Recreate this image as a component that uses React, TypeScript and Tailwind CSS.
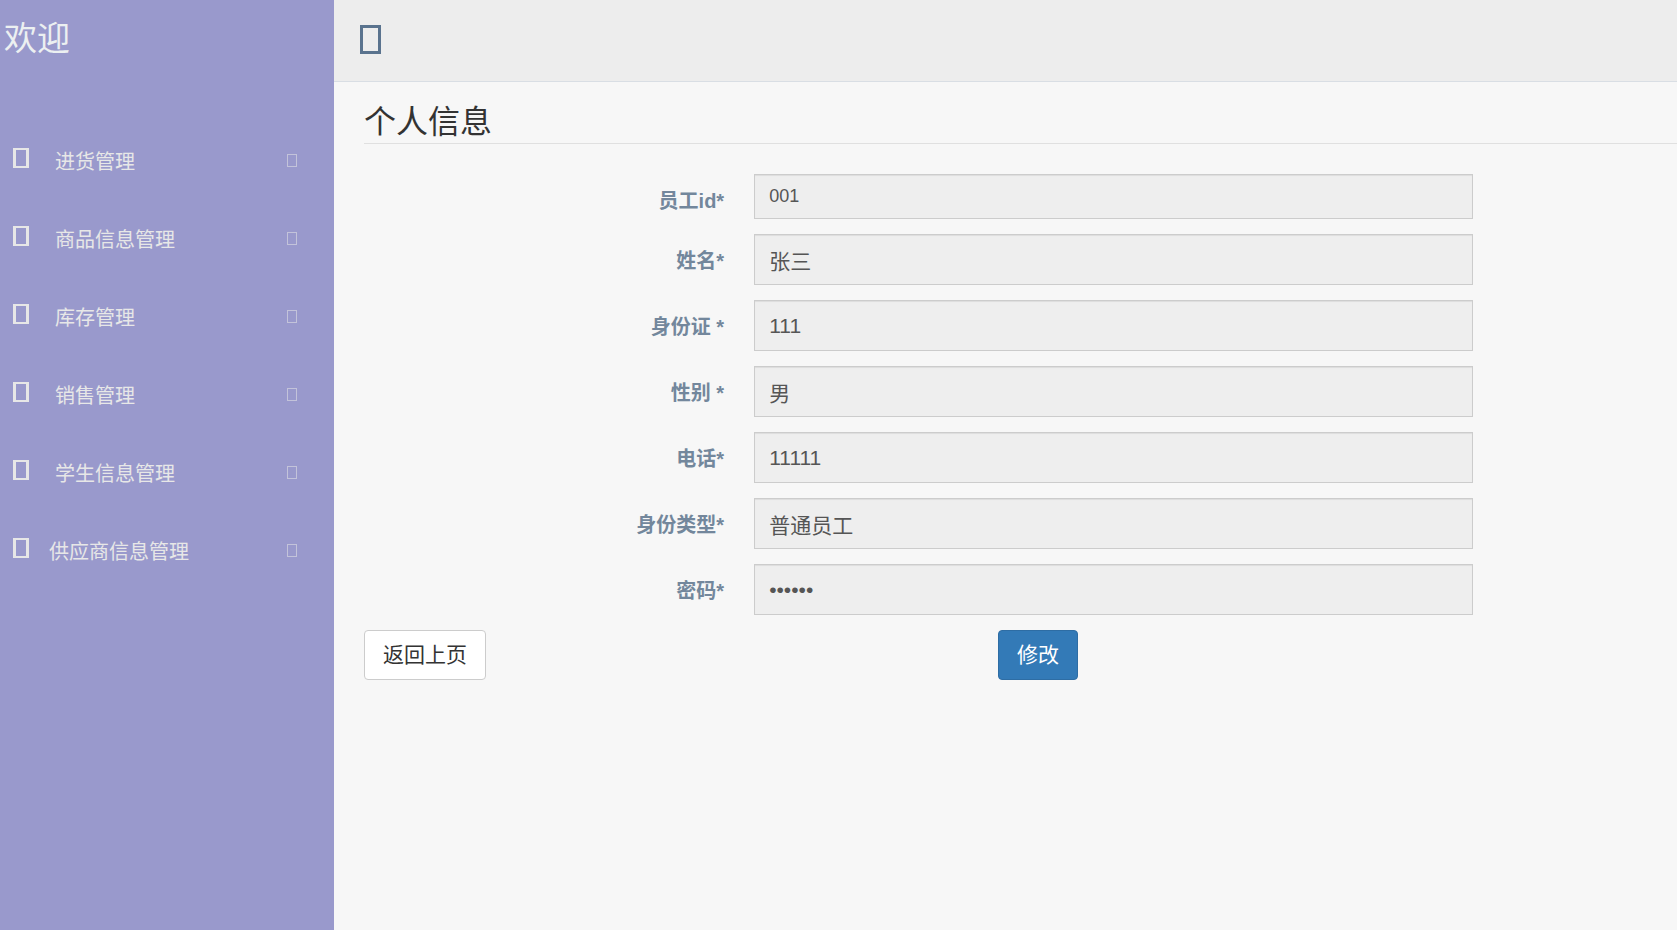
import React from 'react';

interface MenuItem {
    title: string;
    gap: string;
}

interface Field {
    id: string;
    label: string;
    value: string;
    type: string;
    size: string;
}

const menu: MenuItem[] = [
    { title: '进货管理', gap: 'ml-[26px]' },
    { title: '商品信息管理', gap: 'ml-[26px]' },
    { title: '库存管理', gap: 'ml-[26px]' },
    { title: '销售管理', gap: 'ml-[26px]' },
    { title: '学生信息管理', gap: 'ml-[26px]' },
    { title: '供应商信息管理', gap: 'ml-5' },
];

const fields: Field[] = [
    { id: 'staffId', label: '员工id*', value: '001', type: 'text', size: 'h-[45px] text-[18px]' },
    { id: 'name', label: '姓名*', value: '张三', type: 'text', size: 'h-[51px] text-[21px]' },
    { id: 'idCard', label: '身份证 *', value: '111', type: 'text', size: 'h-[51px] text-[21px]' },
    { id: 'gender', label: '性别 *', value: '男', type: 'text', size: 'h-[51px] text-[21px]' },
    { id: 'phone', label: '电话*', value: '11111', type: 'text', size: 'h-[51px] text-[21px]' },
    { id: 'role', label: '身份类型*', value: '普通员工', type: 'text', size: 'h-[51px] text-[21px]' },
    { id: 'password', label: '密码*', value: '111111', type: 'password', size: 'h-[51px] text-[21px]' },
];

// hollow box, side strokes can be heavier than the top and bottom ones
const BoxIcon = ({ width, height, side, cap }: { width: number; height: number; side: number; cap: number }) => (
    <svg width={width} height={height} aria-hidden="true" className="shrink-0">
        <path fill="currentColor" fillRule="evenodd"
            d={`M0 0H${width}V${height}H0ZM${side} ${cap}V${height - cap}H${width - side}V${cap}Z`} />
    </svg>
);

const Sidebar = () => (
    <aside className="w-[334px] shrink-0 bg-[#9999cc] text-[#e7e7e7]">
        <a href="#" className="block h-[76px] pl-1 text-[33px] leading-[78px] text-[#ecf0f1]">欢迎</a>
        <nav className="pt-[45px]">
            <ul>
                {menu.map((item) => (
                    <li key={item.title}>
                        <a href="#" className="flex h-[78px] items-center pl-[13px] pr-[37px] text-[20px]">
                            <span className="pb-1"><BoxIcon width={16} height={20} side={3} cap={2} /></span>
                            <span className={`pt-1 ${item.gap}`}>{item.title}</span>
                            <span className="ml-auto text-[#c3c3da]"><BoxIcon width={10} height={13} side={1} cap={1} /></span>
                        </a>
                    </li>
                ))}
            </ul>
        </nav>
    </aside>
);

const ProfileForm = () => (
    <form onSubmit={(e) => e.preventDefault()}>
        <div className="flex flex-col gap-[15px]">
            {fields.map((field) => (
                <div key={field.id} className="grid grid-cols-[2fr_4fr_1fr] items-start">
                    <label htmlFor={field.id} className="h-[42px] pr-[15px] pt-[13px] text-right text-[20px] font-bold leading-7 text-[#73879c]">
                        {field.label}
                    </label>
                    <div className="flex pl-[15px] pr-4">
                        <input id={field.id} type={field.type} defaultValue={field.value} readOnly
                            className={`w-full border border-[#ccc] bg-[#eee] px-[14px] text-[#555] shadow-[inset_0_1px_1px_rgba(0,0,0,0.075)] outline-none ${field.size}`}
                        />
                    </div>
                </div>
            ))}
        </div>
        <div className="mt-[15px] flex">
            <button type="button" className="h-[50px] rounded border border-[#ccc] bg-white px-[18px] text-[21px] text-[#333]">返回上页</button>
            <button type="submit" className="ml-[39%] h-[50px] rounded border border-[#2e6da4] bg-[#337ab7] px-[18px] text-[21px] text-white">修改</button>
        </div>
    </form>
);

const App = () => {
    return (
        <div className="flex min-h-screen bg-[#f7f7f7] font-['Liberation_Sans','Noto_Sans_CJK_SC',sans-serif]">
            <Sidebar />
            <div className="min-w-0 flex-1">
                <header className="flex h-[82px] items-center border-b border-[#d9dee4] bg-[#ededed] pl-[26px] pb-[2px]">
                    <button type="button" aria-label="菜单" className="text-[#5a738e]">
                        <BoxIcon width={21} height={29} side={3} cap={3} />
                    </button>
                </header>
                <main className="pl-[30px]">
                    <h1 className="mb-[30px] border-b border-[#e0e0e0] pb-px pt-5 text-[32px] leading-10 text-[#333]">个人信息</h1>
                    <ProfileForm />
                </main>
            </div>
        </div>
    );
};

export default App;
